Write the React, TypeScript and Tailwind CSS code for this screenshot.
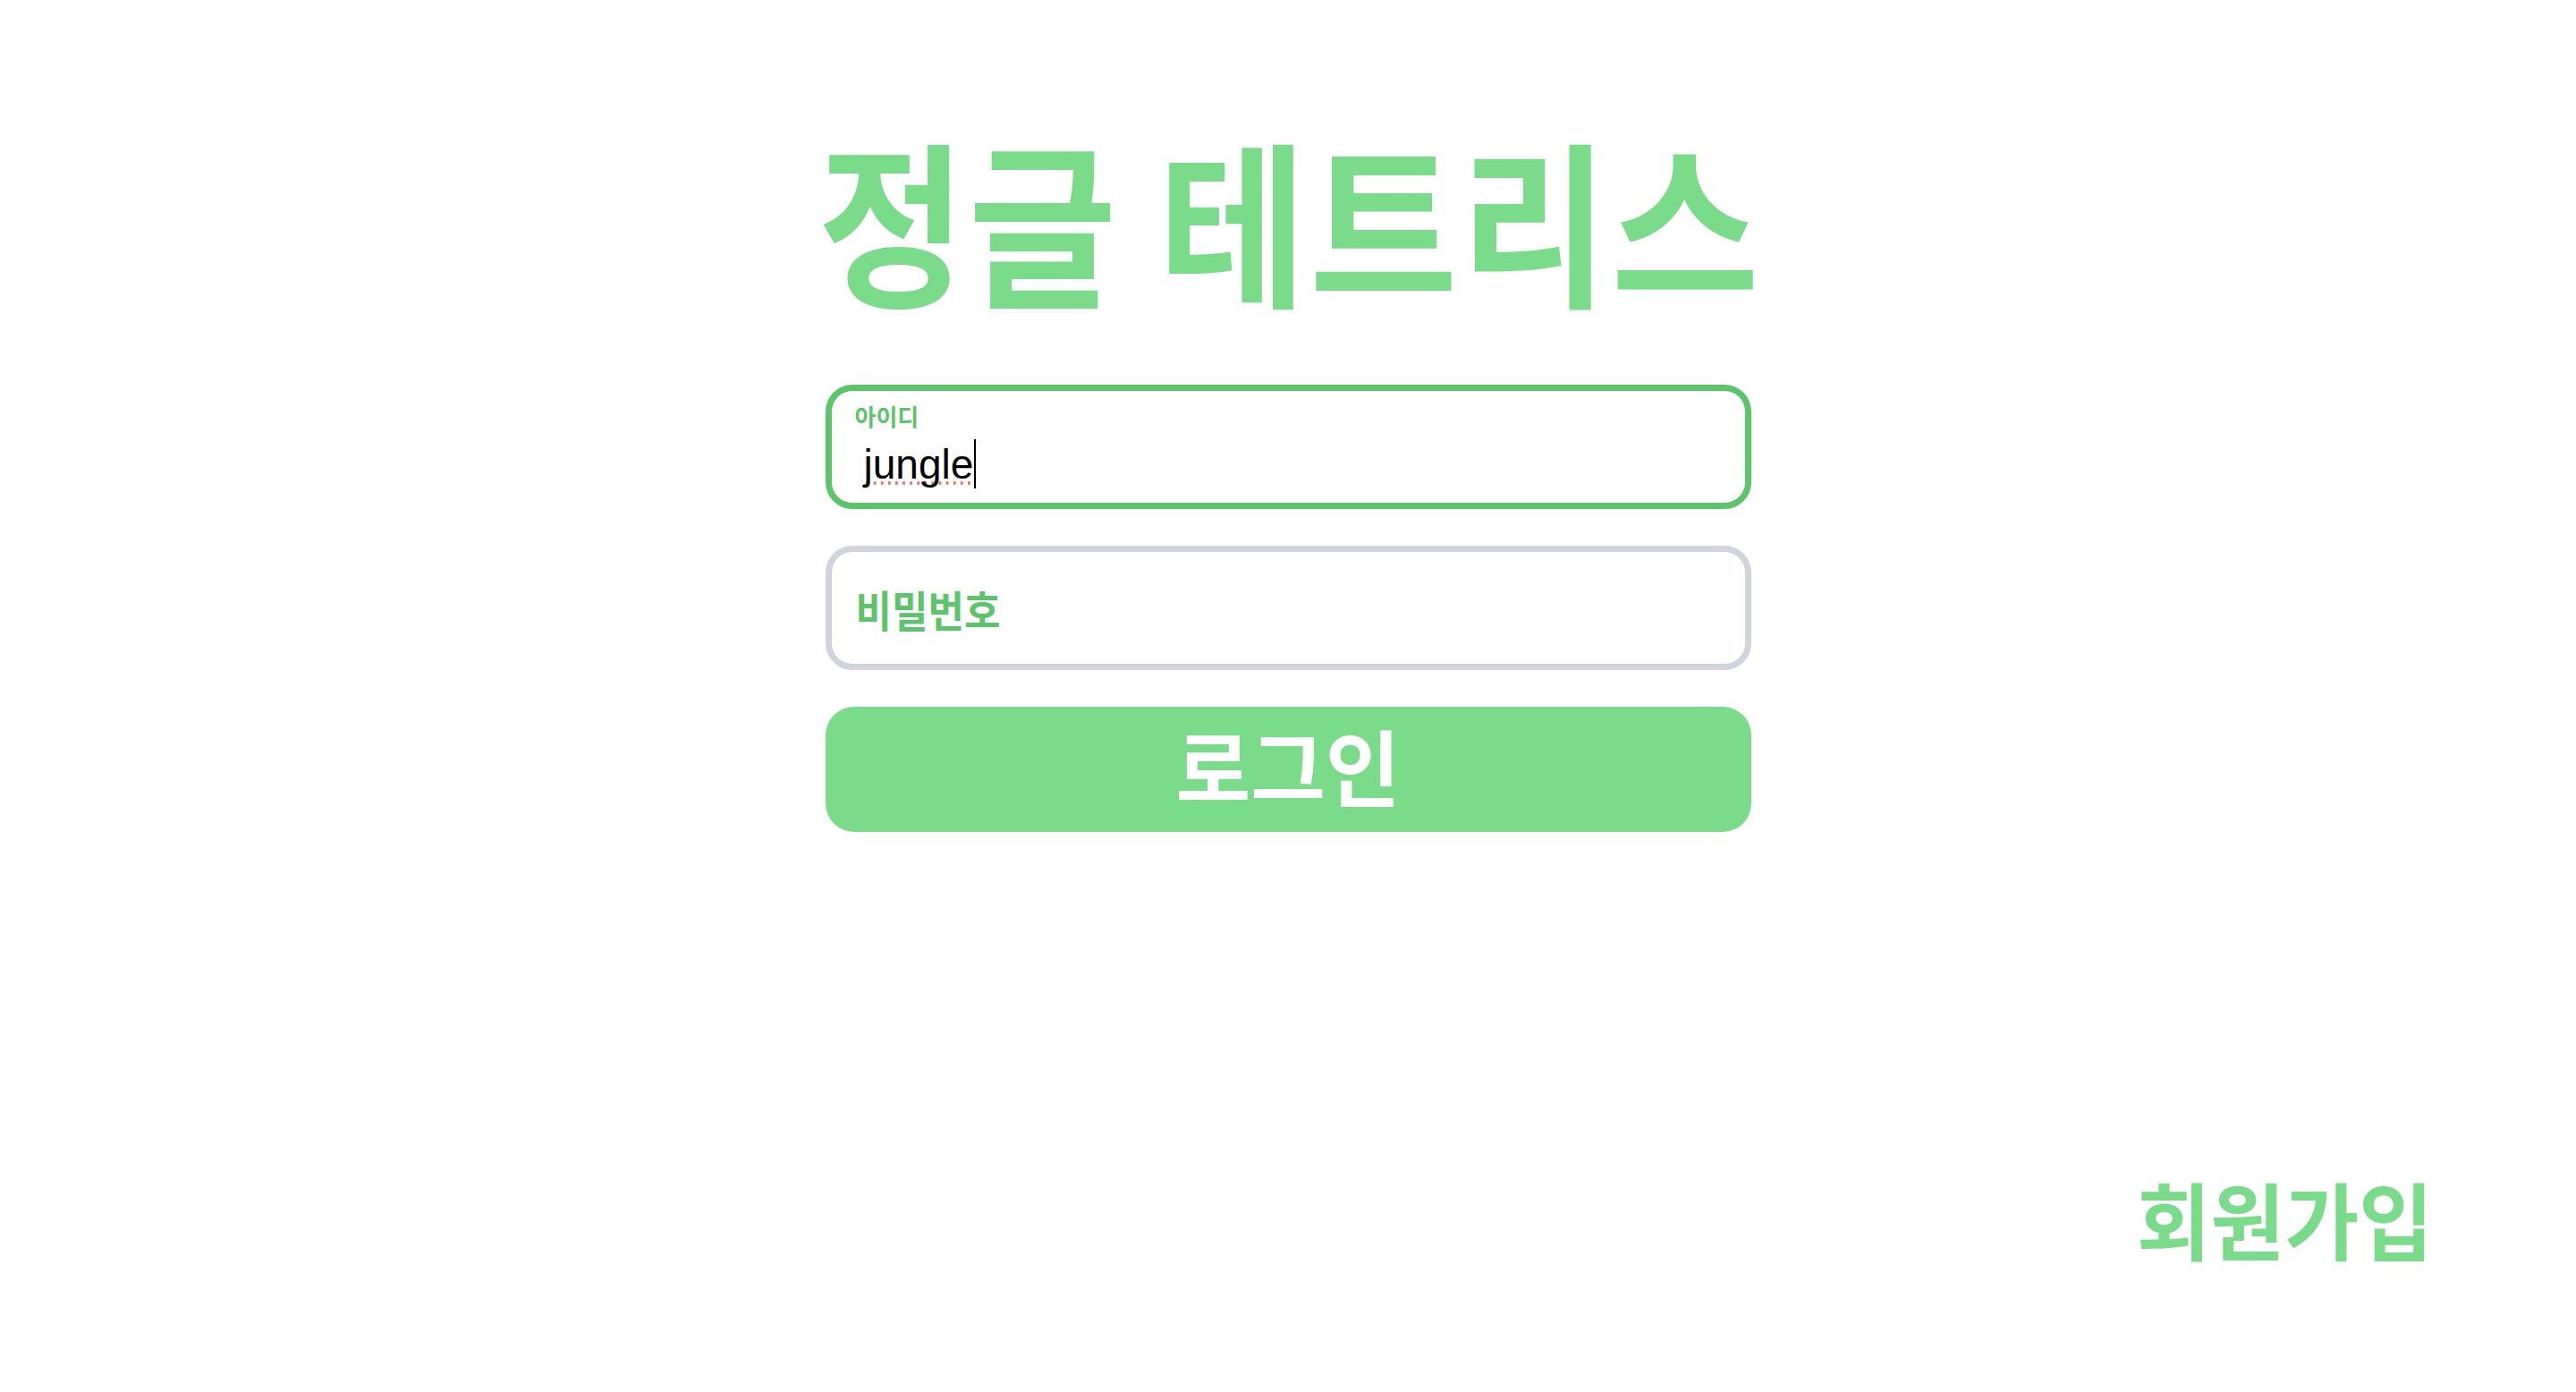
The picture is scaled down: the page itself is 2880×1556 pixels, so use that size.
import React from "react";

const KR = "font-['Noto_Sans_CJK_KR','Noto_Sans',sans-serif]";

export default function App() {
  return (
    <div className={`w-full h-screen bg-white flex flex-col items-center ${KR}`}>
      <h1 className="mt-[152px] pl-[4px] text-[180px] leading-none font-bold tracking-[3px] text-[#7adb8a] scale-y-[1.1] whitespace-nowrap">
        정글 테트리스
      </h1>

      <form className="mt-[98px] w-[1035px] flex flex-col gap-[41px]" onSubmit={(e) => e.preventDefault()}>
        <div className="h-[139px] border-[7px] border-[#5cc46a] rounded-[30px] pl-[26px] pt-[15px] flex flex-col">
          <label className="text-[26px] leading-none font-bold text-[#5cc46a] scale-y-[1.02] origin-top-left">아이디</label>
          <div className="mt-[13px] ml-[10px] flex items-center">
            <span className="inline-block text-[46px] leading-none text-black font-['Liberation_Sans',Arial,sans-serif] bg-[radial-gradient(circle,#e8756b_1.7px,transparent_1.9px)] bg-[length:8.1px_6px] bg-[position:0_41px] bg-repeat-x">
              jungle
            </span>
            <span className="ml-[1px] w-[2px] h-[55px] bg-black" />
          </div>
        </div>

        <div className="h-[139px] border-[7px] border-[#d1d5db] rounded-[30px] pl-[27px] flex items-center">
          <span className="text-[44px] leading-none font-bold text-[#5cc46a] scale-y-[1.08]">비밀번호</span>
        </div>

        <button
          type="submit"
          className="h-[140px] rounded-[32px] bg-[#7adb8a] flex items-center justify-center pb-[12px]"
        >
          <span className="text-[91px] leading-none font-bold text-white scale-y-[1.02]">로그인</span>
        </button>
      </form>

      <div className="w-full mt-[386px] flex justify-end pr-[160px]">
        <a href="#" className="text-[90px] leading-none font-bold text-[#7adb8a] scale-y-[1.05]">
          회원가입
        </a>
      </div>
    </div>
  );
}
